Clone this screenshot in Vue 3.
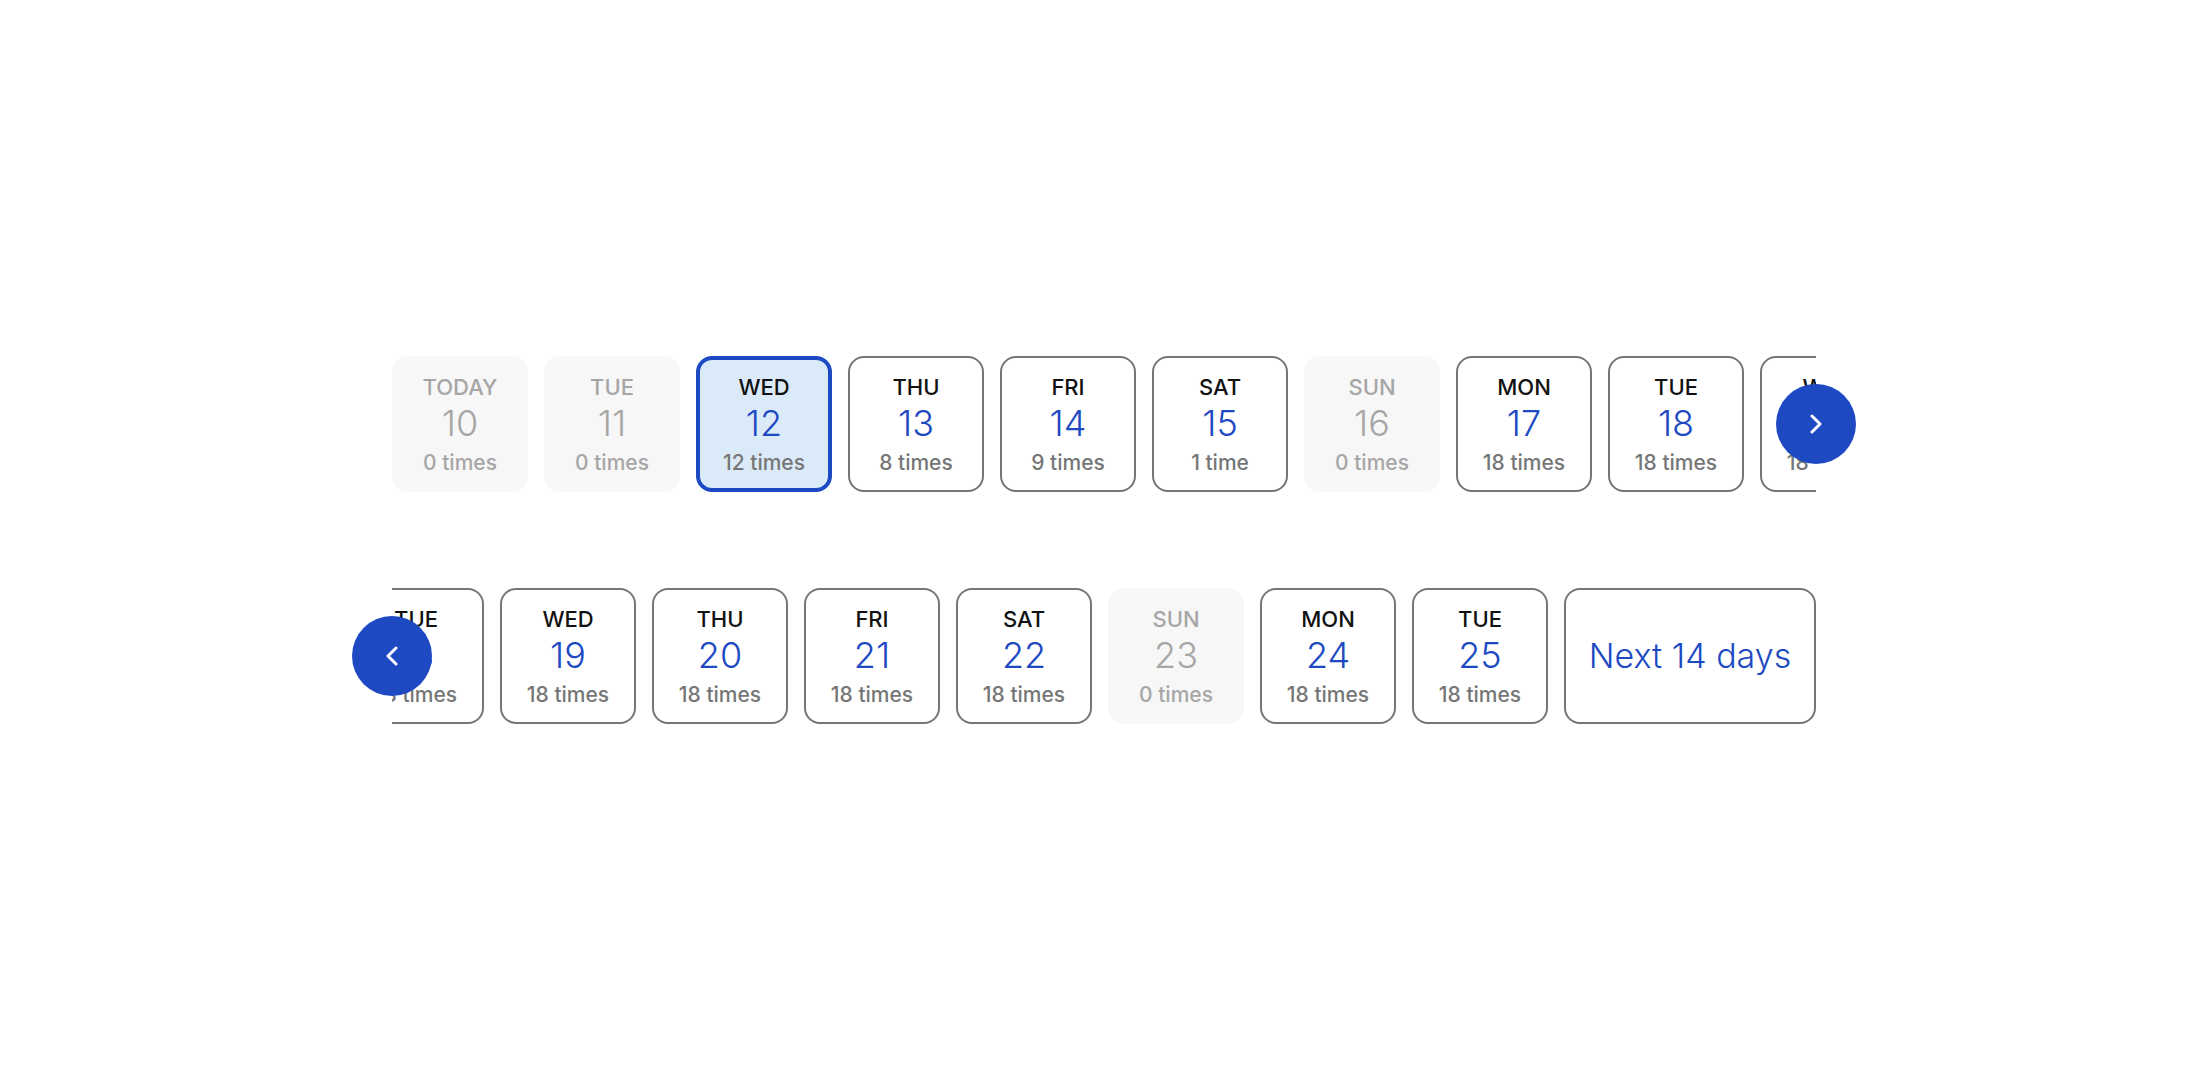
<script setup>
const first = [
  ['TODAY', 10, 0],
  ['TUE', 11, 0],
  ['WED', 12, 12],
  ['THU', 13, 8],
  ['FRI', 14, 9],
  ['SAT', 15, 1],
  ['SUN', 16, 0],
  ['MON', 17, 18],
  ['TUE', 18, 18],
  ['WED', 19, 18]
]
const last = [
  ['TUE', 18, 18],
  ['WED', 19, 18],
  ['THU', 20, 18],
  ['FRI', 21, 18],
  ['SAT', 22, 18],
  ['SUN', 23, 0],
  ['MON', 24, 18],
  ['TUE', 25, 18]
]
const toDay = ([name, date, times]) => ({ name, date, times })
const carousels = [
  { id: 'start', days: first.map(toDay), selected: 12, more: false },
  { id: 'end', days: last.map(toDay), selected: null, more: true }
]
</script>

<template>
  <main class="page">
    <section v-for="c in carousels" :key="c.id" class="carousel" :class="c.id" aria-label="Choose a date">
      <div class="track">
        <button
          v-for="d in c.days"
          :key="d.date"
          type="button"
          class="card day"
          :class="{ selected: d.date === c.selected }"
          :disabled="d.times === 0"
          :aria-pressed="d.date === c.selected"
        >
          <span class="name">{{ d.name }}</span>
          <span class="date">{{ d.date }}</span>
          <span class="times">{{ d.times }} {{ d.times === 1 ? 'time' : 'times' }}</span>
        </button>
        <button v-if="c.more" type="button" class="card more">Next 14 days</button>
      </div>
      <button type="button" class="arrow" :aria-label="c.more ? 'Previous dates' : 'Next dates'">
        <svg viewBox="0 0 24 24" width="24" height="24" aria-hidden="true">
          <path :d="c.more ? 'M16 4l-8 8 8 8' : 'M8 4l8 8-8 8'" />
        </svg>
      </button>
    </section>
  </main>
</template>

<style>
body {
  margin: 0;
  background: #fff;
}
</style>

<style scoped>
.page {
  box-sizing: border-box;
  min-height: 100vh;
  padding: 48px 80px;
  display: flex;
  flex-direction: column;
  align-items: center;
  justify-content: center;
  gap: 96px;
  font-family: Inter, "Liberation Sans", sans-serif;
}
.carousel {
  position: relative;
  width: 100%;
  max-width: 1424px;
}
.track {
  display: flex;
  gap: 16px;
  overflow: hidden;
}
.end .track {
  justify-content: flex-end;
}
.card {
  box-sizing: border-box;
  flex: none;
  height: 136px;
  padding: 0;
  display: flex;
  flex-direction: column;
  align-items: center;
  justify-content: center;
  border: 2px solid #767676;
  border-radius: 16px;
  background: #fff;
  color: #767676;
  font-family: inherit;
  white-space: nowrap;
  cursor: pointer;
}
.day {
  width: 136px;
  padding-top: 6px;
}
.name {
  font-size: 22px;
  line-height: 28px;
  font-weight: 500;
  color: #111;
}
.date {
  font-size: 36px;
  line-height: 44px;
  font-weight: 300;
  color: #1d49c2;
}
.times {
  font-size: 21px;
  line-height: 36px;
  font-weight: 500;
}
.selected {
  border: 4px solid #1d49c2;
  background: #dbeaf9;
}
.card:disabled {
  border-color: #f7f7f7;
  background: #f7f7f7;
  cursor: default;
}
.card:disabled span {
  color: #a6a6a6;
}
.more {
  width: 252px;
  font-size: 34px;
  line-height: 44px;
  font-weight: 300;
  color: #1d49c2;
}
.arrow {
  position: absolute;
  top: 28px;
  right: -40px;
  width: 80px;
  height: 80px;
  padding: 0;
  display: flex;
  align-items: center;
  justify-content: center;
  border: 0;
  border-radius: 50%;
  background: #1d49c2;
  cursor: pointer;
}
.end .arrow {
  right: auto;
  left: -40px;
}
.arrow path {
  fill: none;
  stroke: #fff;
  stroke-width: 3;
  stroke-linecap: round;
  stroke-linejoin: round;
}
</style>
